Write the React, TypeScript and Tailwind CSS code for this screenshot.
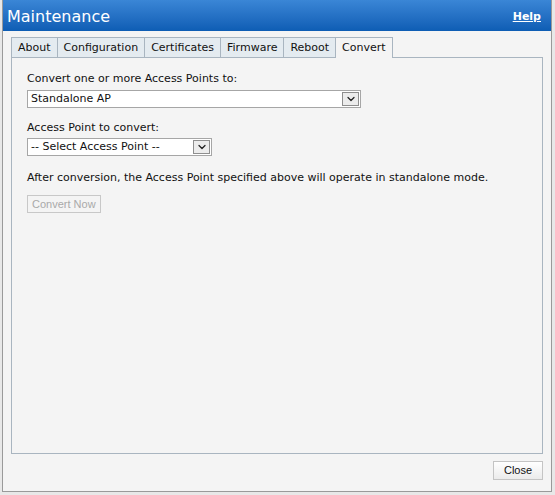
import { ChevronDown } from "lucide-react"

const tabs = ["About", "Configuration", "Certificates", "Firmware", "Reboot", "Convert"]

function Select({ value, width }: { value: string; width: string }) {
  return (
    <div className={`flex h-[18px] items-stretch border border-[#a6a6a6] bg-white ${width}`}>
      <span className="flex-1 pl-[3px] leading-[16px]">{value}</span>
      <span className="m-px flex w-[17px] items-center justify-center border border-[#8e8e8e] bg-[#ececec]">
        <ChevronDown size={12} strokeWidth={2.5} className="text-[#222]" />
      </span>
    </div>
  )
}

export default function App() {
  return (
    <div className="h-[495px] w-[555px] bg-[#e8e8e8] pl-[2px] pr-[3px] pb-[3px] font-['DejaVu_Sans',sans-serif] text-[11px] text-[#111]">
      <div className="flex h-full flex-col border border-t-0 border-[#9a9a9a] bg-[#f4f4f4]">
        <div className="flex h-[31px] items-center justify-between bg-gradient-to-b from-[#3a86d6] to-[#0d5db4] pl-[4px] pr-[10px] pt-[3px] text-white">
          <span className="text-[16px] leading-none">Maintenance</span>
          <a className="text-[11px] font-bold underline">Help</a>
        </div>
        <div className="flex-1 px-[8px] pt-[6px]">
          <div className="flex h-[20px] items-stretch">
            {tabs.map(t => (
              <div
                key={t}
                className={
                  t === "Convert"
                    ? "relative z-10 -mb-px border border-b-0 border-[#a9b5c0] bg-[#f4f4f4] px-[6px] leading-[19px]"
                    : "border border-r-0 border-b-0 border-[#a9b5c0] bg-[#e4ebf0] px-[6px] leading-[19px]"
                }
              >
                {t}
              </div>
            ))}
          </div>
          <div className="h-[397px] border border-[#a9b5c0] px-[15px] pt-[14px]">
            <div className="leading-[14px]">Convert one or more Access Points to:</div>
            <div className="mt-[4px]">
              <Select value="Standalone AP" width="w-[334px]" />
            </div>
            <div className="mt-[13px] leading-[14px]">Access Point to convert:</div>
            <div className="mt-[3px]">
              <Select value="-- Select Access Point --" width="w-[185px]" />
            </div>
            <div className="mt-[15px] leading-[14px]">
              After conversion, the Access Point specified above will operate in standalone mode.
            </div>
            <button className="mt-[10px] h-[18px] border border-[#c8c8c8] bg-[#f4f4f4] px-[4px] font-['Liberation_Sans',sans-serif] text-[11px] leading-[16px] text-[#a9a9a9]">
              Convert Now
            </button>
          </div>
          <div className="mt-[7px] flex justify-end">
            <button className="h-[19px] w-[50px] border border-[#c4c4c4] bg-gradient-to-b from-white to-[#ebebeb] font-['Liberation_Sans',sans-serif] text-[11px] leading-[17px] text-[#111]">
              Close
            </button>
          </div>
        </div>
      </div>
    </div>
  )
}
